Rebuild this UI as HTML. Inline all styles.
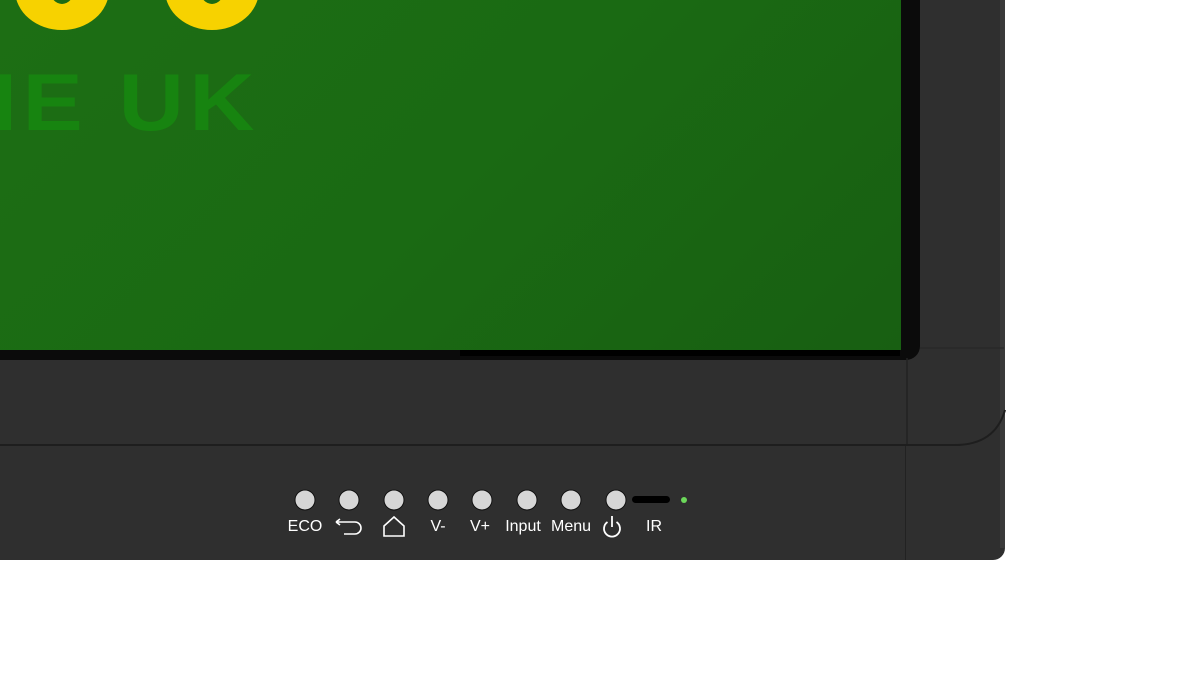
<!DOCTYPE html>
<html><head><style>
body{margin:0;width:1200px;height:674px;background:#fff;position:relative;overflow:hidden;font-family:"Liberation Sans",sans-serif}
.a{position:absolute}
</style></head><body>
<div class="a" style="left:0;top:0;width:1005px;height:560px;background:#2f2f2f;border-bottom-right-radius:12px"></div>
<div class="a" style="left:1000px;top:0;width:5px;height:548px;background:#3a3a3a"></div>
<div class="a" style="left:0;top:0;width:920px;height:360px;background:#0b0b0b;border-bottom-right-radius:14px"></div>
<div class="a" style="left:0;top:0;width:901px;height:350px;background:linear-gradient(135deg,#1d6e14,#1a6a13 50%,#185f12)"></div>
<div class="a" style="left:460px;top:350px;width:440px;height:6px;background:#000"></div>
<svg class="a" style="left:0;top:0" width="300" height="40">
<ellipse cx="62" cy="-10" rx="47" ry="40" fill="#f7d200"/>
<ellipse cx="62" cy="-10" rx="12" ry="14" fill="#1c6c14"/>
<ellipse cx="212" cy="-10" rx="47" ry="40" fill="#f7d200"/>
<ellipse cx="212" cy="-10" rx="12" ry="14" fill="#1c6c14"/>
</svg>
<div class="a" style="left:-8px;top:52px;font-size:98px;font-weight:bold;color:#178410;letter-spacing:6px;line-height:100px;transform:scaleY(0.74);transform-origin:0 0;transform:none"><span style="display:inline-block;transform:scale(0.92,0.82);transform-origin:0 50%">IE UK</span></div>
<div class="a" style="left:0;top:444px;width:960px;height:2px;background:#1e1e1e"></div>
<svg class="a" style="left:900px;top:340px" width="106" height="110"><path d="M7 18 V104" stroke="#222" stroke-width="1.5" fill="none"/><path d="M55 105 Q95 105 105 70" stroke="#1e1e1e" stroke-width="2" fill="none"/><path d="M20 8 H104" stroke="#262626" stroke-width="1"/></svg>
<div class="a" style="left:905px;top:446px;width:1px;height:114px;background:#222"></div>
<svg class="a" style="left:280px;top:480px" width="420" height="60" font-family="Liberation Sans" font-size="16" fill="#fff" text-anchor="middle">
<g fill="#d6d6d6" stroke="#111" stroke-width="1">
<circle cx="25" cy="20" r="10"/><circle cx="69" cy="20" r="10"/><circle cx="114" cy="20" r="10"/><circle cx="158" cy="20" r="10"/><circle cx="202" cy="20" r="10"/><circle cx="247" cy="20" r="10"/><circle cx="291" cy="20" r="10"/><circle cx="336" cy="20" r="10"/>
</g>
<rect x="352" y="16" width="38" height="7" rx="3.5" fill="#000"/>
<circle cx="404" cy="20" r="3" fill="#6cd85a"/>
<text x="25" y="51">ECO</text>
<path d="M56 42 H75 A6 6 0 0 1 75 54 H64 M56 42 l4 -3 M56 42 l4 3" stroke="#fff" stroke-width="1.6" fill="none"/>
<path d="M104 56 V46 L114 37 L124 46 V56 Z" stroke="#fff" stroke-width="1.6" fill="none"/>
<text x="158" y="51">V-</text>
<text x="200" y="51">V+</text>
<text x="243" y="51">Input</text>
<text x="291" y="51">Menu</text>
<path d="M327.5 42 A8 8 0 1 0 336.5 42 M332 36 V47" stroke="#fff" stroke-width="1.8" fill="none"/>
<text x="374" y="51">IR</text>
</svg>
</body></html>
